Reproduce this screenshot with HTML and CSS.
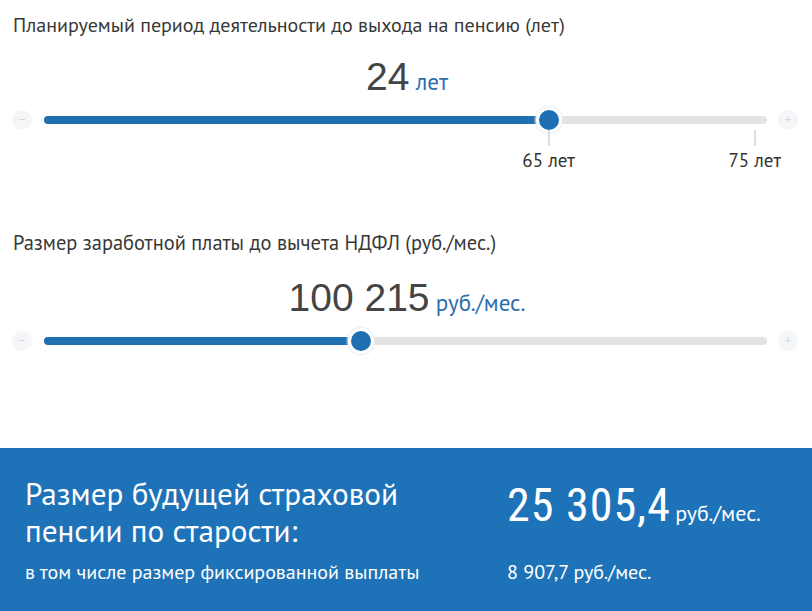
FILE: index.html
```html
<!DOCTYPE html>
<html lang="ru">
<head>
    <meta charset="UTF-8">
    <title>Калькулятор пенсии</title>
    <link rel="stylesheet" href="styles.css">
</head>
<body>
    <div class="calc">
        <div class="field field-period">
            <div class="field-label">Планируемый период деятельности до выхода на пенсию (лет)</div>
            <div class="field-value"><span class="num">24</span> <span class="unit">лет</span></div>
            <div class="slider">
                <span class="step">&minus;</span>
                <div class="track">
                    <div class="fill" style="width: 69.8%"></div>
                    <div class="thumb" style="left: 69.8%"></div>
                    <div class="tick" style="left: 69.8%"><span>65 лет</span></div>
                    <div class="tick" style="left: 98.3%"><span>75 лет</span></div>
                </div>
                <span class="step">+</span>
            </div>
        </div>

        <div class="field field-salary">
            <div class="field-label">Размер заработной платы до вычета НДФЛ (руб./мес.)</div>
            <div class="field-value"><span class="num">100 215</span> <span class="unit">руб./мес.</span></div>
            <div class="slider">
                <span class="step">&minus;</span>
                <div class="track">
                    <div class="fill" style="width: 43.8%"></div>
                    <div class="thumb" style="left: 43.8%"></div>
                </div>
                <span class="step">+</span>
            </div>
        </div>
    </div>

    <div class="result">
        <div class="result-title">Размер будущей страховой пенсии по старости:</div>
        <div class="result-sum"><span class="big">25 305,4</span> <span class="small">руб./мес.</span></div>
        <div class="result-note">в том числе размер фиксированной выплаты</div>
        <div class="result-fixed">8 907,7 руб./мес.</div>
    </div>
</body>
</html>
```

FILE: styles.css
```css
body {
    margin: 0;
    background: #fff;
    font-family: "PT Sans", "Open Sans", "Liberation Sans", sans-serif;
    color: #333;
}

.calc {
    padding-top: 12px;
    height: 448px;
    box-sizing: border-box;
}

.field-label {
    padding-left: 13px;
    font-size: 20px;
    line-height: 26px;
    color: #383838;
}

.field-salary .field-label {
    font-size: 20.4px;
}

.field-value {
    text-align: center;
    margin-top: 17px;
    height: 44px;
    line-height: 44px;
    padding-left: 2px;
}

.field-value .num {
    font-family: "Liberation Sans", Arial, sans-serif;
    font-size: 39px;
    color: #444;
}

.field-value .unit {
    margin-left: 2px;
    font-size: 23px;
    line-height: 1;
    color: #2b6fae;
}

.slider {
    display: flex;
    align-items: center;
    height: 22px;
    margin-top: 10px;
    padding: 0 14px 0 12px;
}

.step {
    width: 20px;
    height: 20px;
    border-radius: 50%;
    background: #f5f6f8;
    color: #d5d8dc;
    font-size: 13px;
    line-height: 20px;
    text-align: center;
    flex: none;
}

.track {
    position: relative;
    flex: 1;
    height: 8px;
    margin: 0 11px 0 12px;
    border-radius: 4px;
    background: #e3e3e3;
}

.fill {
    height: 100%;
    border-radius: 4px;
    background: #1f6fb3;
}

.thumb {
    position: absolute;
    top: 50%;
    width: 20px;
    height: 20px;
    margin: -13px 0 0 -13px;
    border-radius: 50%;
    background: #1f6fb3;
    border: 3px solid #fff;
    box-shadow: 0 0 2px 1px #e2edf7;
}

.tick {
    position: absolute;
    top: 14px;
    width: 2px;
    height: 16px;
    margin-left: -1px;
    background: #dcdcdc;
}

.tick span {
    position: absolute;
    top: 17px;
    left: 1px;
    transform: translateX(-50%);
    white-space: nowrap;
    font-size: 19px;
    line-height: 26px;
    color: #333;
}

.field-salary {
    margin-top: 99px;
}

.field-salary .field-value {
    margin-top: 20px;
}

.result {
    display: grid;
    grid-template-columns: 482px 1fr;
    align-items: start;
    align-content: start;
    padding: 27px 0 0 25px;
    height: 163px;
    box-sizing: border-box;
    background: #1e73b8;
    color: #fff;
}

.result-title {
    width: 420px;
    font-size: 31.2px;
    line-height: 37px;
}

.result-sum {
    height: 74px;
    line-height: 46px;
    padding-top: 7px;
    box-sizing: border-box;
    white-space: nowrap;
}

.result-sum .big {
    font-family: "Liberation Sans Narrow", "Roboto Condensed", "DejaVu Sans Condensed", sans-serif;
    font-size: 46px;
    letter-spacing: 1px;
}

.result-sum .small {
    font-size: 22px;
    line-height: 1;
}

.result-note,
.result-fixed {
    margin-top: 10px;
    font-size: 20px;
    line-height: 26px;
}
```
